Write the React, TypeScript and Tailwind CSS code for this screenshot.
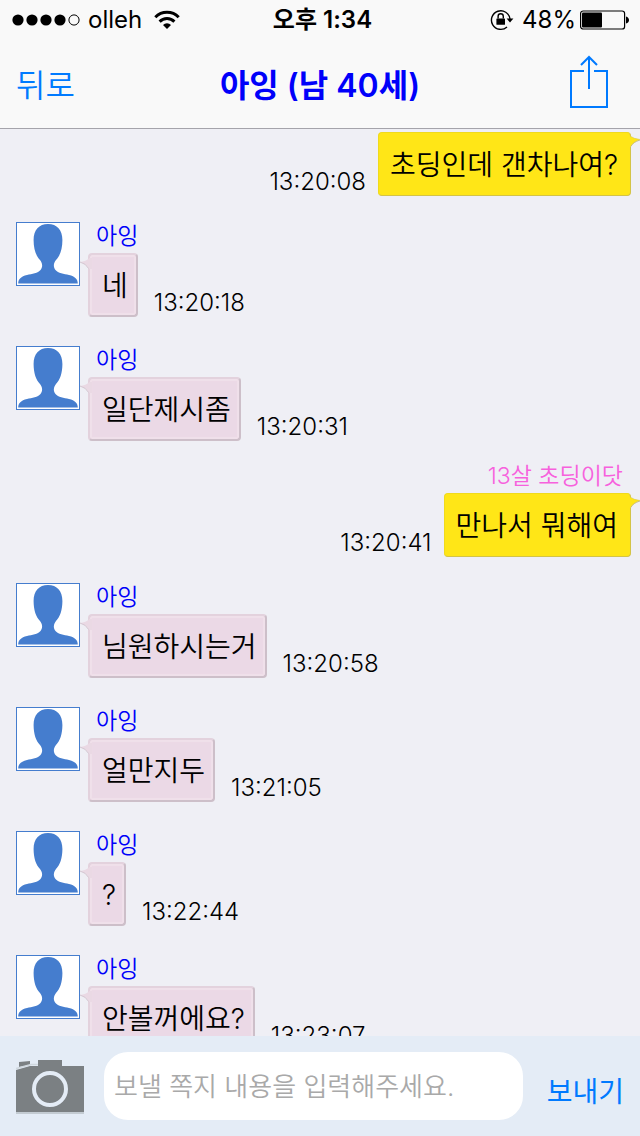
import React from 'react';

interface Message {
  id: number;
  mine: boolean;
  name?: string;
  text: string;
  time: string;
}

const messages: Message[] = [
  { id: 1, mine: true, text: '초딩인데 갠차나여?', time: '13:20:08' },
  { id: 2, mine: false, name: '아잉', text: '네', time: '13:20:18' },
  { id: 3, mine: false, name: '아잉', text: '일단제시좀', time: '13:20:31' },
  { id: 4, mine: true, name: '13살 초딩이닷', text: '만나서 뭐해여', time: '13:20:41' },
  { id: 5, mine: false, name: '아잉', text: '님원하시는거', time: '13:20:58' },
  { id: 6, mine: false, name: '아잉', text: '얼만지두', time: '13:21:05' },
  { id: 7, mine: false, name: '아잉', text: '?', time: '13:22:44' },
  { id: 8, mine: false, name: '아잉', text: '안볼꺼에요?', time: '13:23:07' },
];

const StatusBar: React.FC = () => (
  <div className="grid h-10 grid-cols-[1fr_auto_1fr] items-center pl-3 pr-[11px] text-2xl leading-10">
    <div className="flex items-center">
      <svg width="68" height="12" viewBox="0 0 68 12" aria-hidden="true">
        <circle cx="6" cy="6" r="5.6" />
        <circle cx="20" cy="6" r="5.6" />
        <circle cx="34" cy="6" r="5.6" />
        <circle cx="48" cy="6" r="5.6" />
        <circle cx="62" cy="6" r="5.1" fill="none" stroke="#000" />
      </svg>
      <span className="ml-2">olleh</span>
      <svg className="ml-3" width="26" height="20" viewBox="0 0 26 20" fill="none" stroke="#000" aria-hidden="true">
        <path d="M1.3 7.2a16.5 16.5 0 0 1 23.4 0" strokeWidth="3" />
        <path d="M5.6 11.6a10.4 10.4 0 0 1 14.8 0" strokeWidth="3" />
        <path d="M13 19l-4-4.1a5.7 5.7 0 0 1 8 0z" fill="#000" stroke="none" />
      </svg>
    </div>
    <span className="pl-1 font-semibold">오후 1:34</span>
    <div className="flex items-center justify-end">
      <svg width="24" height="22" viewBox="0 0 24 22" fill="none" stroke="#000" aria-hidden="true">
        <path d="M20 10A9.3 9.3 0 1 0 17 18" strokeWidth="1.4" />
        <path d="M16.6 9.6h6.8l-3.4 4z" fill="#000" stroke="none" />
        <rect x="6.4" y="9.4" width="8.6" height="6.4" rx="0.6" fill="#000" stroke="none" />
        <path d="M8.1 9.6V7.4a2.6 2.6 0 0 1 5.2 0v2.2" strokeWidth="1.4" />
      </svg>
      <span className="ml-2">48%</span>
      <svg className="ml-1" width="49" height="20" viewBox="0 0 49 20" aria-hidden="true">
        <rect x="0.6" y="1" width="44" height="18" rx="2.6" fill="none" stroke="#000" strokeWidth="1.2" />
        <rect x="2" y="2.5" width="20" height="15" rx="1" />
        <path d="M46 6.4q3 1 3 3.6t-3 3.6z" />
      </svg>
    </div>
  </div>
);

const Avatar: React.FC = () => (
  <svg className="mt-2 shrink-0" width="64" height="64" viewBox="0 0 64 64" aria-hidden="true">
    <rect x="0.5" y="0.5" width="63" height="63" fill="#fff" stroke="#457dce" />
    <path
      fill="#457dce"
      d="M32 2C23 2 17.6 8 17.6 18C17.6 27 20 34 24 38C26.5 41 27 45 24.5 48C22 51 16 52 11 53C5 54.5 2.2 57 2.2 61.5H61.8C61.8 57 59 54.5 53 53C48 52 42 51 39.5 48C37 45 37.5 41 40 38C44 34 46.4 27 46.4 18C46.4 8 41 2 32 2Z"
    />
  </svg>
);

const ReceivedMessage: React.FC<{ message: Message }> = ({ message }) => (
  <li className="flex pb-[21px] pl-4">
    <Avatar />
    <div className="ml-2">
      <div className="h-[39px] pl-2 pt-2 text-[23px] leading-7 text-[#0000fa]">{message.name}</div>
      <div className="flex items-end">
        <div className="relative h-16 rounded border-2 border-[#e3d2dd] border-b-[#cdbfc9] border-r-[#cdbfc9] bg-[#ebd9e6] pl-3 pr-2 text-[28px] leading-[62px] shadow-[inset_0_0_1px_2px_#f0e0ea]">
          <svg className="absolute -left-[10px] top-[2px]" width="12" height="12" viewBox="0 0 12 12" aria-hidden="true">
            <path d="M12 1H9.5Q6 4.5 0 5Q6 6.5 9 12h3z" fill="#ead9e4" />
            <path d="M0 5Q6 6.5 8.6 11.5" fill="none" stroke="#d3c6d0" />
          </svg>
          {message.text}
        </div>
        <time className="ml-4 text-2xl font-light leading-7">{message.time}</time>
      </div>
    </div>
  </li>
);

const SentMessage: React.FC<{ message: Message }> = ({ message }) => (
  <li className="pb-[18px] pr-[9px]">
    {message.name && (
      <div className="h-[31px] pr-2 text-right text-[23px] leading-7 text-[#f761dd]">{message.name}</div>
    )}
    <div className="flex items-end justify-end">
      <time className="mr-3 text-2xl font-light leading-7">{message.time}</time>
      <div className="relative h-16 rounded border border-[#f0da1c] border-b-[#d3c347] border-r-[#d3c347] bg-[#ffe617] pl-[11px] pr-3 text-[28px] leading-[64px]">
        <svg className="absolute -right-[10px] top-[2px]" width="11" height="12" viewBox="0 0 11 12" aria-hidden="true">
          <path d="M0 1H1Q5 4 11 4.5Q4 7 1.5 12H0z" fill="#ffe617" />
          <path d="M11 5Q4 7 1.8 11.5" fill="none" stroke="#c9bd7a" />
          <path d="M1 1Q5 4 11 4.5" fill="none" stroke="#d8c84a" strokeWidth="0.6" />
        </svg>
        {message.text}
      </div>
    </div>
  </li>
);

const App: React.FC = () => {
  return (
    <div className="flex h-screen flex-col bg-[#efeff5] font-['Inter','Noto_Sans_CJK_KR',sans-serif] text-black">
      {/* Header */}
      <header className="shrink-0 border-b border-[#a5a4ab] bg-[#f9f9f9]">
        <StatusBar />
        <div className="grid h-[88px] grid-cols-[1fr_auto_1fr] items-center px-4">
          <button type="button" className="justify-self-start pt-1 text-[32px] font-[350] text-[#007aff]">
            뒤로
          </button>
          <h1 className="pt-1 text-[32px] font-semibold text-[#0000fa]">아잉 (남 40세)</h1>
          <button type="button" aria-label="공유" className="mb-1 mr-4 justify-self-end">
            <svg width="38" height="54" viewBox="0 0 38 54" fill="none" stroke="#007aff" strokeWidth="2">
              <path d="M14 16H1v36h36V16H24" />
              <path d="M19 34V2M11 10l8-8 8 8" />
            </svg>
          </button>
        </div>
      </header>

      {/* Messages */}
      <ul className="min-h-0 flex-1 overflow-y-auto pt-[3px] font-[350] [scrollbar-width:none]">
        {messages.map((message) =>
          message.mine ? (
            <SentMessage key={message.id} message={message} />
          ) : (
            <ReceivedMessage key={message.id} message={message} />
          )
        )}
      </ul>

      {/* Input bar */}
      <form className="flex shrink-0 items-center bg-[#e4ecf6] px-4 py-4" onSubmit={(e) => e.preventDefault()}>
        <button type="button" aria-label="사진">
          <svg width="68" height="56" viewBox="0 0 68 56">
            <path d="M0 54h68v2H0z" fill="#c3cbd2" />
            <path d="M0 12L14 8H22V2H46V8H68V54H0z" fill="#7b8083" />
            <path d="M3 4l11-1v4L3 9z" fill="#7b8083" />
            <path d="M0 10.5L15 6.5H22" fill="none" stroke="#cfd7de" strokeWidth="1.5" />
            <circle cx="34" cy="31" r="16" fill="none" stroke="#e4ecf6" strokeWidth="4" />
          </svg>
        </button>
        <input
          type="text"
          aria-label="쪽지 내용"
          placeholder="보낼 쪽지 내용을 입력해주세요."
          className="ml-5 h-[68px] min-w-0 flex-1 rounded-3xl bg-white px-[10px] text-[26px] font-[350] outline-none placeholder:text-[#a9a9a9]"
        />
        <button type="submit" className="ml-6 pt-3 text-[28px] text-[#007aff]">
          보내기
        </button>
      </form>
    </div>
  );
};

export default App;
